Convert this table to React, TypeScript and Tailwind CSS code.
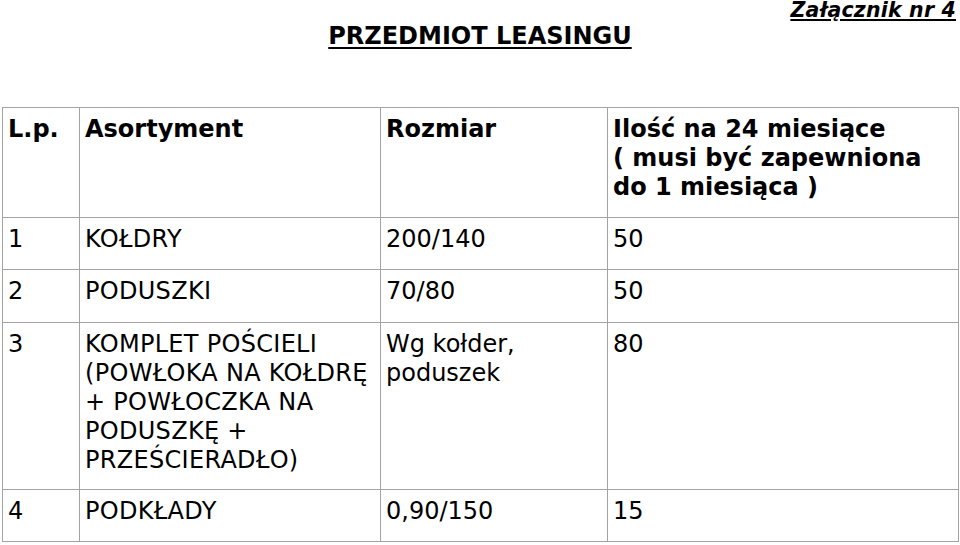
import React from 'react';

const font = { fontFamily: '"DejaVu Sans", Verdana, sans-serif' };

const rows = [
  { lp: '1', name: ['KOŁDRY'], size: ['200/140'], qty: '50', h: 'h-[52px]' },
  { lp: '2', name: ['PODUSZKI'], size: ['70/80'], qty: '50', h: 'h-[53px]' },
  {
    lp: '3',
    name: ['KOMPLET POŚCIELI', '(POWŁOKA NA KOŁDRĘ', '+ POWŁOCZKA NA', 'PODUSZKĘ +', 'PRZEŚCIERADŁO)'],
    size: ['Wg kołder,', 'poduszek'],
    qty: '80',
    h: 'h-[167px]',
  },
  { lp: '4', name: ['PODKŁADY'], size: ['0,90/150'], qty: '15', h: 'h-[52px]' },
];

const Lines = ({ lines }: { lines: string[] }) => (
  <>
    {lines.map((l, i) => (
      <div key={i} className="whitespace-nowrap">{l}</div>
    ))}
  </>
);

export default function App() {
  const cell = 'border-r border-b border-[#a3a3a3] pt-[7px] pl-[5px]';

  return (
    <div className="w-[960px] h-[545px] bg-white text-black overflow-hidden" style={font}>
      {/* attachment label */}
      <div className="flex justify-end pr-[4px] h-[20px]">
        <span className="text-[20.5px] leading-[20px] font-bold italic underline underline-offset-[2px] tracking-[0.2px]">
          Załącznik nr 4
        </span>
      </div>

      {/* title */}
      <div className="mt-[2px] text-center text-[24px] leading-[29px] font-bold underline underline-offset-[3px]">
        PRZEDMIOT LEASINGU
      </div>

      {/* table */}
      <div className="mt-[56px] ml-[2px] w-[957px] border-t border-l border-[#a3a3a3] text-[24px] leading-[29px] grid grid-cols-[77px_301px_227px_351px]">
        <div className={`${cell} h-[110px] font-bold`}>L.p.</div>
        <div className={`${cell} font-bold`}>Asortyment</div>
        <div className={`${cell} font-bold`}>Rozmiar</div>
        <div className={`${cell} font-bold`}>
          <Lines lines={['Ilość na 24 miesiące', '( musi być zapewniona', 'do 1 miesiąca )']} />
        </div>

        {rows.map((r) => (
          <React.Fragment key={r.lp}>
            <div className={`${cell} ${r.h}`}>{r.lp}</div>
            <div className={`${cell} tracking-[0.3px]`}>
              <Lines lines={r.name} />
            </div>
            <div className={cell}>
              <Lines lines={r.size} />
            </div>
            <div className={cell}>{r.qty}</div>
          </React.Fragment>
        ))}
      </div>
    </div>
  );
}
